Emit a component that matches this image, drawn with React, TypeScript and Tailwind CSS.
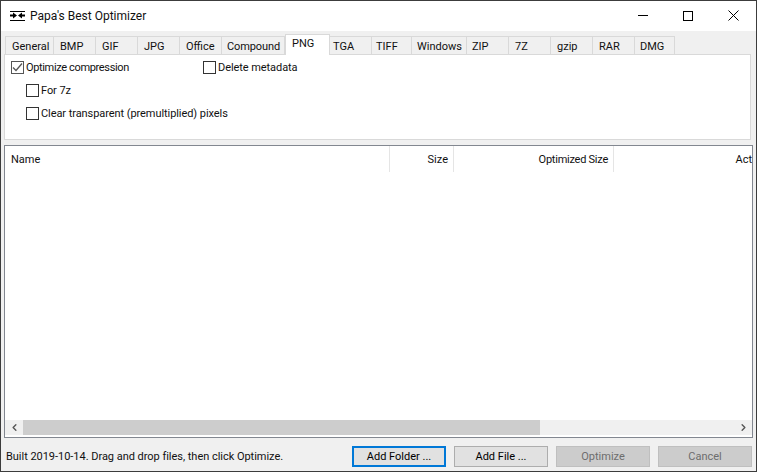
import { ChevronLeft, ChevronRight } from 'lucide-react'

const tabs = [
  { name: 'General', w: 'w-[49px]', text: 'pl-[6px]' },
  { name: 'BMP', w: 'w-[42px]', text: 'pl-[6px]' },
  { name: 'GIF', w: 'w-[42px]', text: 'pl-[6px]' },
  { name: 'JPG', w: 'w-[42px]', text: 'pl-[6px]' },
  { name: 'Office', w: 'w-[42px]', text: 'pl-[6px]' },
  { name: 'Compound', w: 'w-[63px]', text: 'pl-[5px] tracking-[-0.1px]' },
  { name: 'PNG', w: 'w-[45px]', text: 'pl-[6px]', active: true },
  { name: 'TGA', w: 'w-[42px]', text: 'pl-[3px]' },
  { name: 'TIFF', w: 'w-[40px]', text: 'pl-[4px]' },
  { name: 'Windows', w: 'w-[55px]', text: 'pl-[5px]' },
  { name: 'ZIP', w: 'w-[42px]', text: 'pl-[5px]' },
  { name: '7Z', w: 'w-[42px]', text: 'pl-[6px]' },
  { name: 'gzip', w: 'w-[42px]', text: 'pl-[6px]' },
  { name: 'RAR', w: 'w-[42px]', text: 'pl-[6px]' },
  { name: 'DMG', w: 'w-[40px]', text: 'pl-[5px]' },
]

function Check({ label, checked, className, tight }: { label: string; checked?: boolean; className?: string; tight?: boolean }) {
  return (
    <div className={`flex items-center h-[16px] ${className ?? ''}`}>
      <div className={`w-[13px] h-[13px] bg-white border shrink-0 ${checked ? 'border-[#555]' : 'border-[#333]'}`}>
        {checked && (
          <svg width="11" height="11" viewBox="0 0 11 11" fill="none">
            <path d="M1 5.5 L4 8.5 L10 1.5" stroke="#555" strokeWidth="1.3" />
          </svg>
        )}
      </div>
      <span className={`ml-[2px] pt-[2px] whitespace-nowrap ${tight ? 'tracking-[-0.35px]' : 'tracking-[-0.07px]'}`}>{label}</span>
    </div>
  )
}

function Btn({ label, variant }: { label: string; variant: 'focus' | 'normal' | 'disabled' }) {
  const cls =
    variant === 'focus'
      ? 'border-2 border-[#0078d7] bg-[#e1e1e1] text-black'
      : variant === 'normal'
        ? 'border border-[#adadad] bg-[#e1e1e1] text-black'
        : 'border border-[#bfbfbf] bg-[#cccccc] text-[#6d6d6d]'
  return <div className={`w-[94px] h-[21px] flex items-center justify-center pt-[1px] ${cls}`}>{label}</div>
}

function Col({ label, className }: { label: string; className: string }) {
  return <div className={`h-[26px] flex items-center pt-[2px] border-r border-[#e5e5e5] shrink-0 ${className}`}>{label}</div>
}

export default function App() {
  return (
    <div className="w-[757px] h-[472px] overflow-hidden bg-[#f0f0f0] border border-[#3c3c3c] text-[11px] leading-[16px] text-[#111] font-['Roboto',sans-serif] flex flex-col">
      {/* Title bar */}
      <div className="h-[30px] bg-white flex items-center shrink-0">
        <svg className="ml-[8px]" width="17" height="11" viewBox="0 0 17 11">
          <path d="M1 0.5H16M1 9.5H16" stroke="#000" strokeWidth="1" />
          <path d="M1 4.5H4M13 4.5H16" stroke="#000" strokeWidth="2" />
          <path d="M4 1.5L8 4.5L4 7.5ZM13 1.5L9 4.5L13 7.5Z" fill="#000" />
        </svg>
        <span className="ml-[4px] text-[12px]">Papa's Best Optimizer</span>
        <div className="ml-auto flex items-center">
          <div className="w-[46px] h-[30px] flex items-center justify-center -mt-[1px]">
            <div className="w-[10px] h-px bg-black" />
          </div>
          <div className="w-[46px] h-[30px] flex items-center justify-center -mt-[1px] -ml-[1px]">
            <div className="w-[10px] h-[10px] border border-black" />
          </div>
          <div className="w-[45px] h-[30px] flex items-center justify-center -mt-[1px]">
            <svg width="11" height="11" viewBox="0 0 11 11">
              <path d="M0.5 0.5L10.5 10.5M10.5 0.5L0.5 10.5" stroke="#000" strokeWidth="1" />
            </svg>
          </div>
        </div>
      </div>

      {/* Tabs */}
      <div className="flex pl-[4px] pt-[5px] h-[23px] shrink-0 relative z-10">
        {tabs.map(t => (
          <div
            key={t.name}
            className={
              t.active
                ? `${t.w} ${t.text} h-[21px] -mt-[2px] pt-[1px] bg-white border border-b-0 border-[#d9d9d9] shrink-0`
                : `${t.w} ${t.text} h-[18px] bg-[#f0f0f0] border border-l-0 first:border-l border-b-0 border-[#d9d9d9] pt-[2px] shrink-0`
            }
          >
            {t.name}
          </div>
        ))}
      </div>

      {/* Tab pane */}
      <div className="ml-[3px] mr-[5px] h-[86px] bg-white border border-[#d9d9d9] shrink-0 pl-[6px] pt-[4px]">
        <div className="flex">
          <Check label="Optimize compression" checked tight className="w-[192px]" />
          <Check label="Delete metadata" />
        </div>
        <Check label="For 7z" className="ml-[15px] mt-[7px]" />
        <Check label="Clear transparent (premultiplied) pixels" className="ml-[15px] mt-[7px]" />
      </div>

      {/* File list */}
      <div className="mt-[5px] ml-[3px] mr-[3px] h-[293px] bg-white border border-[#828790] flex flex-col shrink-0">
        <div className="flex grow overflow-hidden items-start">
          <Col label="Name" className="w-[385px] pl-[6px]" />
          <Col label="Size" className="w-[64px] justify-end pr-[5px]" />
          <Col label="Optimized Size" className="w-[160px] justify-end pr-[5px] tracking-[-0.25px]" />
          <div className="h-[26px] pt-[2px] grow flex items-center justify-end overflow-hidden">
            <span className="whitespace-nowrap">Act</span>
          </div>
        </div>
        <div className="h-[15px] bg-[#f0f0f0] flex shrink-0 mb-[2px]">
          <div className="w-[18px] flex items-center justify-center text-[#555]">
            <ChevronLeft size={11} strokeWidth={3} />
          </div>
          <div className="w-[517px] bg-[#cdcdcd]" />
          <div className="ml-auto w-[18px] flex items-center justify-center text-[#555]">
            <ChevronRight size={11} strokeWidth={3} />
          </div>
        </div>
      </div>

      {/* Footer */}
      <div className="flex items-center mt-[7px] pl-[5px] pr-[4px] h-[22px]">
        <span className="whitespace-nowrap pt-[1px] tracking-[-0.03px]">Built 2019-10-14. Drag and drop files, then click Optimize.</span>
        <div className="ml-auto flex gap-[8px]">
          <Btn label="Add Folder ..." variant="focus" />
          <Btn label="Add File ..." variant="normal" />
          <Btn label="Optimize" variant="disabled" />
          <Btn label="Cancel" variant="disabled" />
        </div>
      </div>
    </div>
  )
}
